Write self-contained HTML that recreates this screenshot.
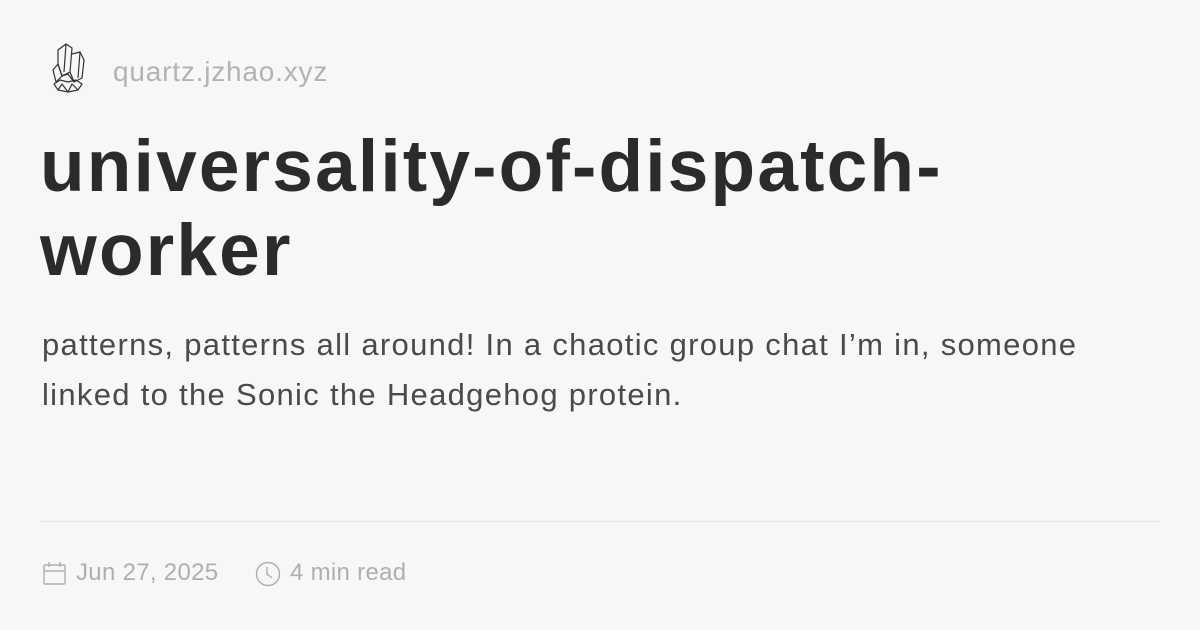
<!DOCTYPE html>
<html><head><style>
body{margin:0;width:1200px;height:630px;background:#f8f7f8;font-family:"Liberation Sans",sans-serif;position:relative;overflow:hidden}
.site{position:absolute;left:113px;top:52px;font-size:28px;color:#b4b3b4;line-height:40px;letter-spacing:0.8px}
h1{position:absolute;left:40px;top:125px;margin:0;font-size:73px;line-height:84px;font-weight:700;color:#2b2b2b;letter-spacing:2.2px}
.desc{position:absolute;left:42px;top:320px;width:1090px;font-size:31px;line-height:50px;color:#4a4a4a;letter-spacing:1.3px}
.hr{position:absolute;left:40px;top:521px;width:1120px;height:1px;background:#e6e5e6}
.meta{position:absolute;top:557px;font-size:24px;line-height:32px;color:#b0afb0;letter-spacing:0.3px}
</style></head><body>
<svg style="position:absolute;left:48px;top:42px" width="40" height="52" viewBox="0 0 40 52" fill="none" stroke="#333" stroke-width="1.2" stroke-linejoin="round">
<path d="M10 8 L18 2 L24 6 L22 30 L14 34 L10 22 Z"/><path d="M18 2 L16 30"/>
<path d="M24 12 L32 10 L36 18 L34 36 L26 40 L22 30"/><path d="M32 10 L30 36"/>
<path d="M5 28 L10 22 L14 34 L8 40 Z"/><path d="M14 34 L20 32 L26 40"/>
<path d="M6 42 L12 38 L20 40 L28 38 L34 42 L30 48 L20 50 L10 48 Z"/><path d="M10 48 L14 42 L20 50 L24 42 L30 48"/>
</svg>
<div class="site">quartz.jzhao.xyz</div>
<h1>universality-of-dispatch-<br>worker</h1>
<div class="desc">patterns, patterns all around! In a chaotic group chat I’m in, someone linked to the Sonic the Headgehog protein.</div>
<div class="hr"></div>
<svg style="position:absolute;left:43px;top:561px" width="24" height="24" viewBox="0 0 24 24" fill="none" stroke="#b0afb0" stroke-width="1.4"><rect x="1" y="4" width="21" height="19" rx="1"/><path d="M1 10h21M6 1v5M17 1v5"/></svg>
<div class="meta" style="left:76px">Jun 27, 2025</div>
<svg style="position:absolute;left:255px;top:561px" width="26" height="26" viewBox="0 0 26 26" fill="none" stroke="#b0afb0" stroke-width="1.4"><circle cx="13" cy="13" r="11.5"/><path d="M12 6v7l5 4"/></svg>
<div class="meta" style="left:290px">4 min read</div>
</body></html>
